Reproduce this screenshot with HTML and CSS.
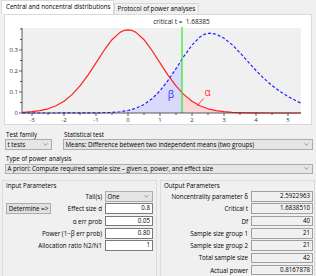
FILE: index.html
```html
<!DOCTYPE html>
<html lang="en">
<head>
    <meta charset="UTF-8">
    <title>G*Power</title>
    <link rel="stylesheet" href="styles.css">
</head>
<body>
    <div class="tabs">
        <div class="tab active">Central and noncentral distributions</div>
        <div class="tab">Protocol of power analyses</div>
    </div>

    <div class="plot-panel">
        <svg class="plot" viewBox="5 15 306 109" width="306" height="109">
            <rect class="plot-bg" x="22" y="28" width="279" height="85"/>

            <!-- beta: noncentral area left of critical t -->
            <polygon class="beta-area" points="22,113 96,112.95 112,112.43 120,111.76 128,110.48 136,108.2 144,104.45 152,98.74 160,90.74 168,80.49 176,68.58 182,59.26 182,113"/>
            <!-- alpha: central area right of critical t -->
            <polygon class="alpha-area" points="182,113 182,92.67 184,94.65 192,101.2 200,105.77 208,108.8 216,110.61 224,111.7 232,112.32 240,112.65 248,112.83 256,112.92 272,112.98 300.8,113"/>

            <polyline class="central" points="22.4,112.4 24,112.32 32,111.7 40,110.61 48,108.8 56,105.77 64,101.2 72,94.65 80,85.9 88,75.05 96,62.8 104,50.48 112,39.7 120,32.38 124,30.42 128,29.8 132,30.42 136,32.38 144,39.7 152,50.48 160,62.8 168,75.05 176,85.9 182,92.67 184,94.65 192,101.2 200,105.77 208,108.8 216,110.61 224,111.7 232,112.32 240,112.65 248,112.83 256,112.92 272,112.98 300.8,113"/>
            <polyline class="noncentral" points="22.4,113 96,112.95 112,112.43 120,111.76 128,110.48 136,108.2 144,104.45 152,98.74 160,90.74 168,80.49 176,68.58 182,59.26 184,56.21 192,45.05 200,36.93 204.8,34.15 209.6,33.2 216,34.21 224,38.21 232,44.6 240,52.8 248,61.6 256,70.5 264,78.5 272,85.5 280,91.5 288,96.5 296,100.8 300.8,103"/>

            <line class="crit" x1="182" y1="27" x2="182" y2="113"/>

            <g class="axis">
                <line x1="22" y1="28" x2="22" y2="113"/>
                <line x1="22" y1="113" x2="301" y2="113"/>
                <path d="M19 113h3M19 92h3M19 71h3M19 50h3M20 102.5h2M20 81.5h2M20 60.5h2M20 39.5h2M20 29h2"/>
                <path d="M32 113v3M64 113v3M96 113v3M128 113v3M160 113v3M192 113v3M224 113v3M256 113v3M288 113v3M48 113v2M80 113v2M112 113v2M144 113v2M176 113v2M208 113v2M240 113v2M272 113v2"/>
            </g>

            <g class="tick-labels">
                <text x="18" y="115" text-anchor="end">0</text>
                <text x="18" y="94" text-anchor="end">0.1</text>
                <text x="18" y="73" text-anchor="end">0.2</text>
                <text x="18" y="52" text-anchor="end">0.3</text>
                <text x="32" y="122" text-anchor="middle">-3</text>
                <text x="64" y="122" text-anchor="middle">-2</text>
                <text x="96" y="122" text-anchor="middle">-1</text>
                <text x="128" y="122" text-anchor="middle">0</text>
                <text x="160" y="122" text-anchor="middle">1</text>
                <text x="192" y="122" text-anchor="middle">2</text>
                <text x="224" y="122" text-anchor="middle">3</text>
                <text x="256" y="122" text-anchor="middle">4</text>
                <text x="288" y="122" text-anchor="middle">5</text>
            </g>

            <text class="crit-label" x="181.5" y="24" text-anchor="middle">critical t =  1.68385</text>
            <text class="beta-label" x="171" y="97.5" text-anchor="middle">β</text>
            <text class="alpha-label" x="207.5" y="96" text-anchor="middle">α</text>
            <line class="alpha-pointer" x1="203.5" y1="98.5" x2="197" y2="106"/>
        </svg>
    </div>

    <div class="selectors">
        <div class="field family">
            <div class="label">Test family</div>
            <div class="combo">t tests <svg class="chev" viewBox="0 0 6 4"><polyline points="0.5,0.5 3,3 5.5,0.5"/></svg></div>
        </div>
        <div class="field stat-test">
            <div class="label">Statistical test</div>
            <div class="combo">Means: Difference between two independent means (two groups) <svg class="chev" viewBox="0 0 6 4"><polyline points="0.5,0.5 3,3 5.5,0.5"/></svg></div>
        </div>
    </div>

    <div class="field analysis">
        <div class="label">Type of power analysis</div>
        <div class="combo">A priori: Compute required sample size – given α, power, and effect size <svg class="chev" viewBox="0 0 6 4"><polyline points="0.5,0.5 3,3 5.5,0.5"/></svg></div>
    </div>

    <div class="groups">
        <div class="group">
            <div class="group-title">Input Parameters</div>
            <div class="params input-params">
                <div class="param-label">Tail(s)</div>
                <div class="combo">One <svg class="chev" viewBox="0 0 6 4"><polyline points="0.5,0.5 3,3 5.5,0.5"/></svg></div>

                <div class="param-label with-button"><button>Determine =&gt;</button>Effect size d</div>
                <div class="value">0.8</div>

                <div class="param-label">α err prob</div>
                <div class="value">0.05</div>

                <div class="param-label">Power (1−β err prob)</div>
                <div class="value">0.80</div>

                <div class="param-label">Allocation ratio N2/N1</div>
                <div class="value">1</div>
            </div>
        </div>

        <div class="group">
            <div class="group-title">Output Parameters</div>
            <div class="params output-params">
                <div class="param-label">Noncentrality parameter δ</div>
                <div class="value out">2.5922963</div>

                <div class="param-label">Critical t</div>
                <div class="value out">1.6838510</div>

                <div class="param-label">Df</div>
                <div class="value out">40</div>

                <div class="param-label">Sample size group 1</div>
                <div class="value out">21</div>

                <div class="param-label">Sample size group 2</div>
                <div class="value out">21</div>

                <div class="param-label">Total sample size</div>
                <div class="value out">42</div>

                <div class="param-label">Actual power</div>
                <div class="value out">0.8167878</div>
            </div>
        </div>
    </div>
</body>
</html>
```

FILE: styles.css
```css
* {
    margin: 0;
    padding: 0;
    box-sizing: border-box;
}

body {
    width: 316px;
    height: 276px;
    overflow: hidden;
    background: #f0f0f0;
    font-family: "Open Sans", sans-serif;
    font-size: 6.2px;
    color: #000;
}

/* tabs */
.tabs {
    display: flex;
    align-items: flex-end;
    height: 14px;
    padding-left: 1px;
}

.tab {
    height: 11.5px;
    line-height: 10px;
    padding: 0 3px 0 2px;
    border: 1px solid #d9d9d9;
    border-bottom: none;
    background: #f0f0f0;
    white-space: nowrap;
}

.tab.active {
    height: 14px;
    line-height: 12.5px;
    padding: 0 3px 0 4px;
    background: #fff;
}

/* chart */
.plot-panel {
    margin-left: 4px;
    width: 308px;
    height: 111px;
    background: #fff;
    border: 1px solid #d9d9d9;
}

.plot {
    display: block;
}

.plot-bg {
    fill: #f0f0f0;
}

.beta-area {
    fill: #d9d9fb;
}

.alpha-area {
    fill: #fbd6d6;
}

.central {
    fill: none;
    stroke: #f22;
    stroke-width: 1.2;
    stroke-linejoin: round;
}

.noncentral {
    fill: none;
    stroke: #22f;
    stroke-width: 1.2;
    stroke-dasharray: 3 2;
}

.crit {
    stroke: #2e2;
    stroke-width: 1.2;
}

.axis line,
.axis path {
    stroke: #333;
    stroke-width: 0.8;
    fill: none;
}

.tick-labels text {
    font-size: 6px;
    fill: #333;
}

.crit-label {
    font-size: 6.5px;
    fill: #222;
    white-space: pre;
}

.beta-label {
    font-size: 10px;
    fill: #33f;
}

.alpha-label {
    font-size: 10px;
    fill: #f33;
}

.alpha-pointer {
    stroke: #f33;
    stroke-width: 0.9;
}

/* selectors */
.label {
    height: 7px;
    line-height: 7px;
    padding-left: 1px;
    margin-bottom: 1.5px;
    white-space: nowrap;
}

.combo {
    height: 10.5px;
    display: flex;
    align-items: center;
    justify-content: space-between;
    padding: 0 3px 0 1.5px;
    background: #e5e5e5;
    border: 1px solid #adadad;
    white-space: nowrap;
}

.chev {
    width: 5px;
    height: 3px;
}

.chev polyline {
    fill: none;
    stroke: #666;
    stroke-width: 0.8;
}

.selectors {
    display: flex;
    gap: 11px;
    padding: 5.8px 3px 0 5px;
}

.family {
    width: 47px;
}

.stat-test {
    width: 250px;
}

.analysis {
    padding: 5.4px 3px 0 5px;
}

/* parameter groups */
.groups {
    display: grid;
    grid-template-columns: 155px 155px;
    column-gap: 3px;
    padding: 6px 0 0 2px;
}

.group {
    height: 100px;
    border: 1px solid #dcdcdc;
    padding: 1px 3px 0 3px;
}

.group + .group {
    padding-right: 1px;
}

.group-title {
    height: 7px;
    line-height: 7px;
    margin-bottom: 2px;
}

.params {
    display: grid;
    grid-auto-rows: 10.5px;
    row-gap: 1.8px;
    column-gap: 3px;
}

.input-params {
    grid-template-columns: 1fr 48px;
}

.output-params {
    grid-template-columns: 1fr 62px;
}

.param-label {
    display: flex;
    align-items: center;
    justify-content: flex-end;
    white-space: nowrap;
}

.param-label.with-button {
    justify-content: space-between;
}

button {
    width: 45px;
    height: 11px;
    font-family: inherit;
    font-size: 6.2px;
    color: #000;
    background: #e1e1e1;
    border: 1px solid #adadad;
}

.value {
    border: 1px solid #7a7a7a;
    background: #fff;
    text-align: right;
    padding-right: 2px;
    line-height: 8.5px;
}

.value.out {
    background: #f0f0f0;
    border-color: #a0a0a0;
}
```
